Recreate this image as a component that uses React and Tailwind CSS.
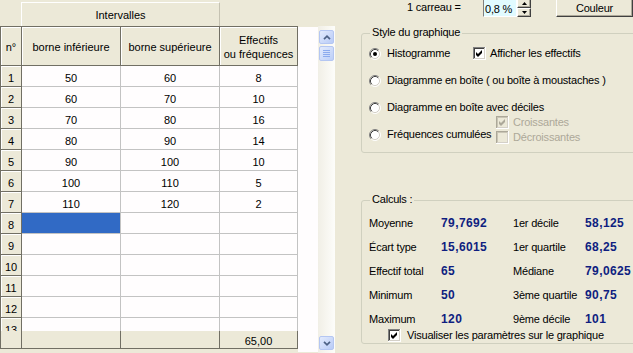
import React from "react";

const DARK = "border-[#716f64]";

function Check({ checked, disabled }) {
  const edge = disabled ? "#aca899" : "#808080";
  const inner = disabled ? "#c9c5b5" : "#404040";
  return (
    <svg width="13" height="13" viewBox="0 0 13 13" className="block shrink-0">
      <g shapeRendering="crispEdges">
        <rect x="0" y="0" width="13" height="13" fill={disabled ? "#ECE9D8" : "#ffffff"} />
        <rect x="0" y="0" width="12" height="1" fill={edge} />
        <rect x="0" y="0" width="1" height="12" fill={edge} />
        <rect x="1" y="1" width="10" height="1" fill={inner} />
        <rect x="1" y="1" width="1" height="10" fill={inner} />
        <rect x="0" y="12" width="13" height="1" fill="#ffffff" />
        <rect x="12" y="0" width="1" height="13" fill="#ffffff" />
        <rect x="1" y="11" width="11" height="1" fill="#d4d0c8" />
        <rect x="11" y="1" width="1" height="11" fill="#d4d0c8" />
      </g>
      {checked && (
        <polygon points="3,5 5,7 9,3 9,6 5,10 3,8" fill={disabled ? "#aca899" : "#000000"} />
      )}
    </svg>
  );
}

function Radio({ checked }) {
  return (
    <svg width="12" height="12" viewBox="0 0 12 12" className="block shrink-0">
      <circle cx="6" cy="6" r="5" fill="#ffffff" />
      <path d="M2.11 9.89 A5.5 5.5 0 0 1 9.89 2.11" fill="none" stroke="#808080" strokeWidth="1" />
      <path d="M9.89 2.11 A5.5 5.5 0 0 1 2.11 9.89" fill="none" stroke="#ffffff" strokeWidth="1" />
      <path d="M2.82 9.18 A4.5 4.5 0 0 1 9.18 2.82" fill="none" stroke="#404040" strokeWidth="1" />
      <path d="M9.18 2.82 A4.5 4.5 0 0 1 2.82 9.18" fill="none" stroke="#d4d0c8" strokeWidth="1" />
      {checked && <circle cx="6" cy="6" r="2" fill="#000000" />}
    </svg>
  );
}

function ScrollBtn({ dir }) {
  return (
    <div className="ml-[1px] w-[15px] h-[14px] rounded-[2px] border border-[#b4c6f2] bg-[linear-gradient(135deg,#e3ebfd,#b8cbf7)] flex items-center justify-center">
      <svg width="8" height="5" viewBox="0 0 8 5">
        <path
          d={dir === "up" ? "M1 4.2L4 1.2L7 4.2" : "M1 0.8L4 3.8L7 0.8"}
          fill="none"
          stroke="#4d6185"
          strokeWidth="1.7"
        />
      </svg>
    </div>
  );
}

const rows = [
  ["1", "50", "60", "8"],
  ["2", "60", "70", "10"],
  ["3", "70", "80", "16"],
  ["4", "80", "90", "14"],
  ["5", "90", "100", "10"],
  ["6", "100", "110", "5"],
  ["7", "110", "120", "2"],
  ["8", "", "", ""],
  ["9", "", "", ""],
  ["10", "", "", ""],
  ["11", "", "", ""],
  ["12", "", "", ""],
  ["13", "", "", ""],
];

const calc = [
  ["Moyenne", "79,7692", "1er décile", "58,125"],
  ["Écart type", "15,6015", "1er quartile", "68,25"],
  ["Effectif total", "65", "Médiane", "79,0625"],
  ["Minimum", "50", "3ème quartile", "90,75"],
  ["Maximum", "120", "9ème décile", "101"],
];

export default function App() {
  return (
    <div className="w-[633px] h-[353px] overflow-hidden bg-[#ECE9D8] flex text-[11px] leading-[13px] text-black font-['Liberation_Sans',Arial,sans-serif]">
      {/* LEFT: grid */}
      <div className="w-[336px] shrink-0 flex flex-col">
        <div className="h-[26px] flex items-end">
          <div className="w-[21px]" />
          <div className="w-[199px] h-[24px] border-t border-l border-white border-r border-r-[#c5c2b2] flex items-center justify-center pt-[2px]">
            Intervalles
          </div>
        </div>
        <div className="flex h-[327px]">
          {/* cells */}
          <div className="w-[298px] flex flex-col">
            <div className={`flex w-[298px] h-[40px] border-t border-b border-l ${DARK} bg-[#ECE9D8]`}>
              <div className={`w-[21px] border-r ${DARK} shadow-[inset_1px_1px_0_#fff] flex items-center justify-center pt-[3px]`}>n°</div>
              <div className={`w-[99px] border-r ${DARK} shadow-[inset_1px_1px_0_#fff] flex items-center justify-center pt-[3px]`}>borne inférieure</div>
              <div className={`w-[99px] border-r ${DARK} shadow-[inset_1px_1px_0_#fff] flex items-center justify-center pt-[3px]`}>borne supérieure</div>
              <div className={`w-[78px] border-r ${DARK} shadow-[inset_1px_1px_0_#fff] flex flex-col items-center justify-center leading-[14px] pt-[1px]`}>
                <span>Effectifs</span>
                <span>ou fréquences</span>
              </div>
            </div>
            <div className="h-[265px] overflow-hidden">
              {rows.map((r, i) => (
                <div key={r[0]} className={`flex w-[298px] h-[21px] border-l ${DARK}`}>
                  <div className={`w-[21px] border-r border-b ${DARK} bg-[#ECE9D8] shadow-[inset_1px_1px_0_#fff] flex items-start justify-center pt-[6px]`}>
                    {r[0]}
                  </div>
                  <div className={`w-[99px] border-r border-b border-[#c3c3c3] flex items-start justify-center pt-[6px] ${i === 7 ? "bg-[#316ac5]" : "bg-[#fffdfe]"}`}>
                    {r[1]}
                  </div>
                  <div className="w-[99px] border-r border-b border-[#c3c3c3] bg-[#fffdfe] flex items-start justify-center pt-[6px]">{r[2]}</div>
                  <div className="w-[78px] border-r border-b border-[#c3c3c3] bg-[#fffdfe] flex items-start justify-center pt-[6px]">{r[3]}</div>
                </div>
              ))}
            </div>
            <div className={`flex w-[298px] h-[18px] border-l border-b ${DARK} bg-[#ECE9D8]`}>
              <div className={`w-[21px] border-r ${DARK}`} />
              <div className={`w-[99px] border-r ${DARK}`} />
              <div className={`w-[99px] border-r ${DARK}`} />
              <div className={`w-[78px] border-r ${DARK} flex items-start justify-center pt-[4px]`}>65,00</div>
            </div>
          </div>
          {/* white filler */}
          <div className="w-[20px] mt-[1px] h-[325px] bg-[#fffdfe]" />
          {/* scrollbar */}
          <div className="w-[17px] h-[327px] flex flex-col pt-[4px] pb-[3px] bg-[linear-gradient(to_right,#f1efe6,#fdfdfa)]">
            <ScrollBtn dir="up" />
            <div className="ml-[1px] mt-[2px] w-[15px] h-[15px] rounded-[2px] border border-[#b4c6f2] bg-[linear-gradient(135deg,#e3ebfd,#bccff8)] flex flex-col items-center justify-center gap-[1px]">
              <div className="w-[7px] h-[1px] bg-[#8cabee]" />
              <div className="w-[7px] h-[1px] bg-[#8cabee]" />
              <div className="w-[7px] h-[1px] bg-[#8cabee]" />
              <div className="w-[7px] h-[1px] bg-[#8cabee]" />
            </div>
            <div className="flex-1" />
            <ScrollBtn dir="down" />
          </div>
        </div>
      </div>

      {/* RIGHT panel */}
      <div className="w-[297px] shrink-0 flex flex-col tracking-[-0.2px]">
        <div className="-mt-[2px] h-[19px] flex items-start">
          <div className="ml-[71px] w-[76px] pt-[3px]">1 carreau =</div>
          <div className="w-[34px] h-[19px] border-t border-l border-[#808080] border-r border-b border-r-white border-b-white bg-[#e1fbff] pl-[1px] pt-[4px]">
            0,8 %
          </div>
          <div className="w-[14px] h-[19px] flex flex-col">
            <div className="h-[10px] border-t border-l border-white border-r border-b border-r-[#404040] border-b-[#404040] shadow-[inset_-1px_-1px_0_#aca899] flex items-end justify-center pb-[2px]">
              <svg width="5" height="3" viewBox="0 0 5 3"><polygon points="0,3 5,3 2.5,0" fill="#000" /></svg>
            </div>
            <div className="h-[9px] border-t border-l border-white border-r border-b border-r-[#404040] border-b-[#404040] shadow-[inset_-1px_-1px_0_#aca899] flex items-center justify-center">
              <svg width="5" height="3" viewBox="0 0 5 3"><polygon points="0,0 5,0 2.5,3" fill="#000" /></svg>
            </div>
          </div>
          <div className="ml-[25px] w-[77px] h-[19px] border-t border-l border-white border-r border-b border-r-[#404040] border-b-[#404040] shadow-[inset_-1px_-1px_0_#aca899] flex items-center justify-center pt-[1px]">
            Couleur
          </div>
        </div>

        {/* Style du graphique */}
        <div className="mt-[16px] ml-[25px] w-[290px] h-[120px] border border-[#d0d0bf] rounded-[3px] relative">
          <div className="absolute left-[8px] top-[-8px] px-[2px] bg-[#ECE9D8]">Style du graphique</div>
          <div className="pt-[6px] pl-[7px] flex flex-col">
            <div className="h-[27px] flex items-center">
              <Radio checked />
              <span className="ml-[6px] w-[86px]">Histogramme</span>
              <Check checked />
              <span className="ml-[4px]">Afficher les effectifs</span>
            </div>
            <div className="h-[27px] flex items-center">
              <Radio />
              <span className="ml-[6px]">Diagramme en boîte ( ou boîte à moustaches )</span>
            </div>
            <div className="h-[27px] flex items-center">
              <Radio />
              <span className="ml-[6px]">Diagramme en boîte avec déciles</span>
            </div>
            <div className="h-[27px] flex items-center">
              <Radio />
              <span className="ml-[6px] w-[109px]">Fréquences cumulées</span>
              <div className="self-start -mt-[6px] flex flex-col text-[#aca899]">
                <div className="h-[15px] flex items-center">
                  <Check checked disabled />
                  <span className="ml-[4px]">Croissantes</span>
                </div>
                <div className="h-[15px] flex items-center">
                  <Check disabled />
                  <span className="ml-[4px]">Décroissantes</span>
                </div>
              </div>
            </div>
          </div>
        </div>

        {/* Calculs */}
        <div className="mt-[47px] ml-[25px] w-[290px] h-[144px] border border-[#d0d0bf] rounded-[3px] relative">
          <div className="absolute left-[8px] top-[-8px] px-[2px] bg-[#ECE9D8]">Calculs :</div>
          <div className="pt-[10px] pl-[7px] flex flex-col">
            {calc.map((c) => (
              <div key={c[0]} className="h-[24px] grid grid-cols-[72px_72px_72px_1fr] items-center">
                <span>{c[0]}</span>
                <span className="font-bold text-[12px] tracking-[0.4px] text-[#0f1e80]">{c[1]}</span>
                <span>{c[2]}</span>
                <span className="font-bold text-[12px] tracking-[0.4px] text-[#0f1e80]">{c[3]}</span>
              </div>
            ))}
            <div className="-mt-[2px] h-[13px] flex items-center ml-[19px]">
              <Check checked />
              <span className="ml-[6px]">Visualiser les paramètres sur le graphique</span>
            </div>
          </div>
        </div>
      </div>
    </div>
  );
}
